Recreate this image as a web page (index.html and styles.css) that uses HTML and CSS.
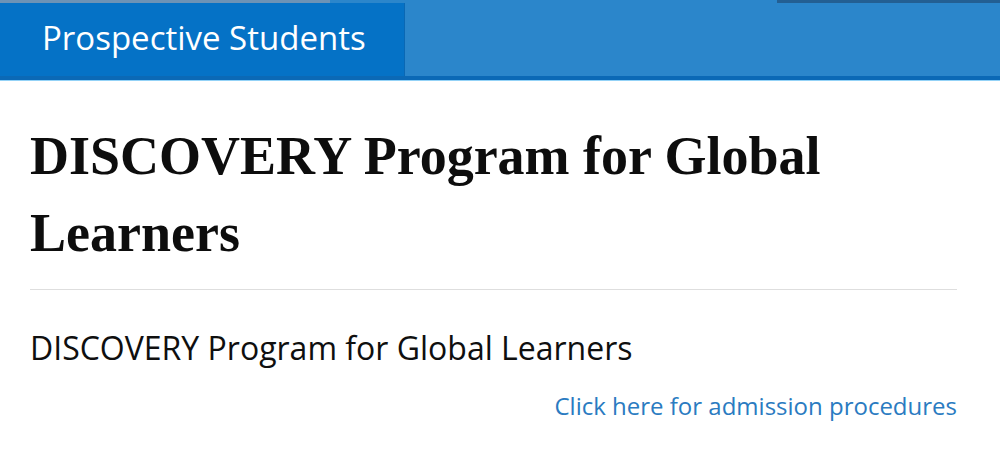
FILE: index.html
```html
<!DOCTYPE html>
<html lang="en">
<head>
    <meta charset="UTF-8">
    <meta name="viewport" content="width=device-width, initial-scale=1.0">
    <title>DISCOVERY Program for Global Learners</title>
    <link rel="stylesheet" href="styles.css">
</head>
<body>
    <!-- Barra do topo -->
    <div class="top-strip">
        <span class="strip-left"></span>
        <span class="strip-right"></span>
    </div>
    <div class="menu-bar">
        <a href="#" class="menu-tab">Prospective Students</a>
    </div>

    <!-- Conteúdo -->
    <main class="page">
        <h1 class="page-title">DISCOVERY Program for Global Learners</h1>
        <h2 class="sub-title">DISCOVERY Program for Global Learners</h2>
        <p class="more-link"><a href="#">Click here for admission procedures</a></p>
    </main>
</body>
</html>
```

FILE: styles.css
```css
* {
    margin: 0;
    padding: 0;
    box-sizing: border-box;
}

body {
    font-family: "Open Sans", "Noto Sans", sans-serif;
    background-color: #ffffff;
    color: #111111;
}

/* Barra do topo */
.top-strip {
    display: flex;
    height: 3px;
    background-color: #2b86cb;
}

.strip-left {
    width: 330px;
    background-color: #6d93b6;
}

.strip-right {
    margin-left: auto;
    width: 223px;
    background-color: #235f93;
}

.menu-bar {
    display: flex;
    height: 77px;
    background-color: #2b86cb;
    border-bottom: 4px solid #0b69b6;
    box-shadow: 0 1px 0 #93d2f7;
}

.menu-tab {
    display: flex;
    align-items: center;
    width: 405px;
    padding-left: 42px;
    padding-bottom: 4px;
    background-color: #0572c6;
    border-right: 1px solid #0a68b4;
    color: #ffffff;
    text-decoration: none;
    font-size: 33px;
}

/* Conteúdo */
.page {
    padding: 38px 43px 0 30px;
}

.page-title {
    font-family: "Liberation Serif", serif;
    font-weight: bold;
    font-size: 54px;
    line-height: 77px;
    color: #0d0d0d;
    padding-bottom: 17px;
    border-bottom: 1px solid #dedede;
}

.sub-title {
    font-weight: normal;
    font-size: 32px;
    margin-top: 36px;
    color: #0f0f0f;
}

.more-link {
    text-align: right;
    font-size: 24px;
    margin-top: 20px;
}

.more-link a {
    color: #2a7bc1;
    text-decoration: none;
}
```
